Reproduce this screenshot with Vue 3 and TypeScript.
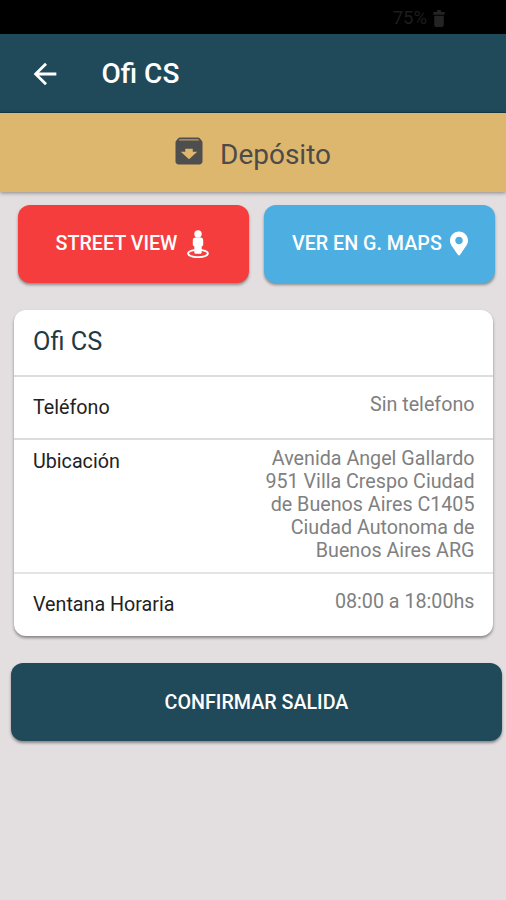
<script setup lang="ts">
interface DetailRow {
  label: string
  value: string
  kind: string
}

const batteryLevel = 75
const rows: DetailRow[] = [
  { label: 'Teléfono', value: 'Sin telefono', kind: 'phone' },
  {
    label: 'Ubicación',
    value: 'Avenida Angel Gallardo\n951 Villa Crespo Ciudad\nde Buenos Aires C1405\nCiudad Autonoma de\nBuenos Aires ARG',
    kind: 'address',
  },
  { label: 'Ventana Horaria', value: '08:00 a 18:00hs', kind: 'hours' },
]
</script>

<template>
  <div class="screen">
    <div class="status-bar">
      <span>{{ batteryLevel }}%</span>
      <svg class="battery" viewBox="0 0 12 18"><path d="M4 0h4v2h4v3H0V2h4zM1 6h10v10q0 2-2 2H3q-2 0-2-2z" /></svg>
    </div>

    <header class="app-bar">
      <svg class="back" viewBox="0 0 24 24"><path d="M20 11H7.83l5.59-5.59L12 4l-8 8 8 8 1.41-1.41L7.83 13H20v-2z" /></svg>
      <h1>Ofi CS</h1>
    </header>

    <div class="banner">
      <svg class="archive" viewBox="0 0 24 24">
        <path class="lid" d="M5.12 5l.81-1h12l.94 1z" />
        <path d="M20.54 5.23l-1.39-1.68C18.88 3.21 18.47 3 18 3H6c-.47 0-.88.21-1.16.55L3.46 5.23C3.17 5.57 3 6.02 3 6.5V19c0 1.1.9 2 2 2h14c1.1 0 2-.9 2-2V6.5c0-.48-.17-.93-.46-1.27zM12 17.5L6.500 12.500H9.500v-2h5v2h3L12 17.500zM5.120 5l.810-1h12l.940 1H5.120z" />
      </svg>
      <span>Depósito</span>
    </div>

    <main>
      <div class="actions">
        <button class="action street">
          <span>STREET VIEW</span>
          <svg class="pegman" viewBox="0 0 22 28">
            <ellipse cx="11" cy="23.500" rx="9.900" ry="3.600" />
            <circle cx="11" cy="3.900" r="3.700" />
            <path d="M8.500 7.500h5q2.700 0 2.700 2.700v4.600q0 1.300-1.500 1.800v5.900q0 1.200-1.200 1.200h-5q-1.200 0-1.200-1.200v-5.900q-1.500-.5-1.500-1.800v-4.600q0-2.700 2.700-2.700z" />
          </svg>
        </button>
        <button class="action maps">
          <span>VER EN G. MAPS</span>
          <svg class="pin" viewBox="0 0 384 512"><path d="M172.268 501.670C26.970 291.031 0 269.413 0 192 0 85.961 85.961 0 192 0s192 85.961 192 192c0 77.413-26.970 99.031-172.268 309.670-9.535 13.774-29.930 13.773-39.464 0zM192 272c44.183 0 80-35.817 80-80s-35.817-80-80-80-80 35.817-80 80 35.817 80 80 80z" /></svg>
        </button>
      </div>

      <section class="card">
        <h2>Ofi CS</h2>
        <div v-for="row in rows" :key="row.kind" class="row" :class="row.kind">
          <span class="label">{{ row.label }}</span>
          <span class="value">{{ row.value }}</span>
        </div>
      </section>

      <button class="confirm">CONFIRMAR SALIDA</button>
    </main>
  </div>
</template>

<style>
body {
  margin: 0;
  background: #e3dedf;
}
</style>

<style scoped>
.screen {
  height: 900px;
  overflow: hidden;
  background: #e3dedf;
  font-family: Roboto, "Liberation Sans", sans-serif;
}
.status-bar {
  display: flex;
  justify-content: flex-end;
  align-items: center;
  gap: 6px;
  box-sizing: border-box;
  height: 34px;
  padding: 2px 61px 0 0;
  background: #000;
  color: #1d1d1d;
  font-size: 18.5px;
}
.battery {
  width: 12px;
  height: 17px;
  fill: #242424;
}
.app-bar {
  display: flex;
  align-items: center;
  box-sizing: border-box;
  height: 79px;
  padding-left: 28px;
  background: #204a5a;
  border-bottom: 1px solid #173c48;
  color: #fff;
}
.back {
  width: 34px;
  height: 34px;
  margin-top: 1px;
  fill: #fff;
}
h1 {
  margin: 2px 0 0 39.5px;
  font-size: 28px;
  line-height: 32px;
  font-weight: 500;
}
.banner {
  position: relative;
  display: flex;
  align-items: center;
  box-sizing: border-box;
  height: 79px;
  padding: 3px 0 0 171px;
  background: #deb76f;
  box-shadow: 0 1px 4px rgba(0, 0, 0, 0.4);
  color: #4c4b49;
  font-size: 28px;
}
.archive {
  width: 36px;
  height: 36px;
  margin: -6px 13px 0 0;
  fill: #4f4e4e;
}
.lid {
  fill: #a38a5c;
}
.actions {
  display: flex;
  gap: 15px;
  padding: 13px 11px 0 18px;
}
button {
  font-family: inherit;
  border: 0;
  margin: 0;
  color: #fff;
  font-size: 19.7px;
  font-weight: 500;
}
.action {
  display: flex;
  align-items: center;
  width: 231px;
  height: 78px;
  border-radius: 12px;
  white-space: nowrap;
  box-shadow: 0 2px 3px rgba(0, 0, 0, 0.38);
}
.action span {
  line-height: 24px;
  margin-top: -1px;
}
.street {
  padding: 0 0 0 37.5px;
  background: #f53d3d;
}
.maps {
  padding: 0 0 0 28px;
  background: #4caee1;
}
.pegman {
  width: 22px;
  height: 28px;
  margin-left: 10px;
  fill: #fff;
}
.pegman ellipse {
  fill: none;
  stroke: #fff;
  stroke-width: 1.9;
}
.pin {
  width: 18px;
  height: 25px;
  margin: -1px 0 0 8.5px;
  fill: #fff;
}
.card {
  margin: 27px 13px 0 14px;
  border-radius: 12px;
  background: #fff;
  box-shadow: 0 2px 3px rgba(0, 0, 0, 0.4);
}
h2 {
  box-sizing: border-box;
  height: 65px;
  margin: 0;
  padding: 16px 19px 0;
  color: #1f3945;
  font-size: 25.3px;
  line-height: 32px;
  font-weight: 400;
}
.row {
  display: flex;
  justify-content: space-between;
  box-sizing: border-box;
  padding: 0 18.5px 0 19px;
  border-top: 2px solid #dcdcdc;
  font-size: 19.7px;
  line-height: 23px;
}
.label {
  color: #222;
}
.value {
  color: #808080;
  text-align: right;
  white-space: pre-line;
}
.phone {
  height: 63px;
}
.phone .label {
  padding-top: 19px;
}
.phone .value {
  padding-top: 16px;
}
.address {
  height: 134px;
}
.address .label {
  padding-top: 10px;
}
.address .value {
  padding-top: 7px;
}
.hours {
  height: 64px;
  border-top-color: #e4e4e4;
}
.hours .label {
  padding-top: 19px;
}
.hours .value {
  padding-top: 16px;
}
.confirm {
  display: block;
  width: 491px;
  height: 78px;
  margin: 27px 0 0 11px;
  padding: 0;
  border-radius: 12px;
  background: #204a5a;
  box-shadow: 0 2px 3px rgba(0, 0, 0, 0.4);
}
</style>
